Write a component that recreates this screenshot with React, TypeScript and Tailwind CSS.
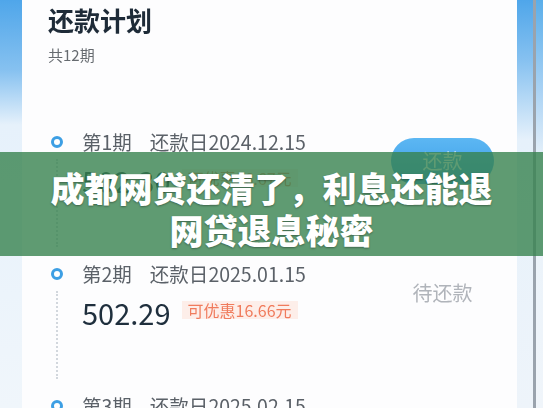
import React from 'react';

type Period = {
  no: number;
  date: string;
  amount: string;
  discount: string;
  due: boolean;
};

const PERIODS: Period[] = [
  { no: 1, date: '2024.12.15', amount: '502.30', discount: '16.67', due: true },
  { no: 2, date: '2025.01.15', amount: '502.29', discount: '16.66', due: false },
  { no: 3, date: '2025.02.15', amount: '502.29', discount: '16.66', due: false },
];

const PeriodRow = ({ p }: { p: Period }) => (
  <div className="flex h-[132px] shrink-0">
    {/* timeline */}
    <div className="w-[18px] flex flex-col items-center pt-[7px]">
      <div className="w-[12px] h-[12px] rounded-full border-[3px] border-[#3d9fe4] bg-white" />
      <div className="mt-[11px] h-[88px] w-0 border-l-2 border-dotted border-[#d2d7dd]" />
    </div>

    <div className="flex-1 ml-[16px]">
      <div className="text-[19.5px] leading-[26px] text-[#5b6168] whitespace-nowrap">
        第{p.no}期<span className="ml-[18px]">还款日{p.date}</span>
      </div>
      <div className="mt-[7px] h-[36px] flex items-center">
        <span className="text-[29px] leading-[36px] text-[#1f2f3d]">{p.amount}</span>
        <span className="ml-[11px] mb-[4px] px-[6px] text-[16px] leading-[18px] bg-[#fdeee9] text-[#f07b5c]">
          可优惠{p.discount}元
        </span>
      </div>
    </div>

    <div className="w-[103px] mr-[23px] pt-[9px]">
      {p.due ? (
        <div className="h-[46px] rounded-full bg-[linear-gradient(to_bottom,#5cb7f3,#3a9be6)] flex items-center justify-center text-white text-[20px]">
          还款
        </div>
      ) : (
        <div className="h-[46px] flex items-center justify-center text-[20px] text-[#b0b4ba]">待还款</div>
      )}
    </div>
  </div>
);

export default function App() {
  return (
    <div className="relative w-[543px] h-[408px] overflow-hidden bg-[#eef4fa] font-['Noto_Sans_CJK_SC','Noto_Sans',sans-serif]">
      {/* App screenshot */}
      <div className="flex h-full blur-[0.4px]">
        <div className="w-[22px] bg-[linear-gradient(to_bottom,#4fa6ea_0px,#86c1f0_70px,#e6f1fb_125px,#f0f6fb_100%)]" />

        <div className="w-[495px] bg-[#fdfdfe] flex flex-col">
          <div className="pl-[26px] pt-[4px]">
            <h1 className="text-[26px] leading-[32px] font-bold text-[#1e2b38]">还款计划</h1>
            <p className="mt-[9px] text-[15px] leading-[20px] text-[#666b70]">共12期</p>
          </div>
          <div className="mt-[27px] h-px bg-[#f1f2f4]" />
          <div className="pl-[26px] pt-[37px] flex flex-col">
            {PERIODS.map((p) => (
              <PeriodRow key={p.no} p={p} />
            ))}
          </div>
        </div>

        <div className="flex-1 flex">
          <div className="w-[16px] bg-[linear-gradient(to_bottom,#4fa6ea_0px,#86c1f0_60px,#e6f1fb_140px,#eef4fa_100%)]" />
          <div className="w-[3px] bg-[#9aa3ad]" />
          <div className="flex-1 bg-[linear-gradient(to_bottom,#5aaeea_0px,#a9d2f4_90px,#e9f2fa_160px,#f0f5fa_100%)]" />
        </div>
      </div>

      {/* Title banner */}
      <div className="absolute left-0 right-0 top-[152px] h-[104px] bg-[rgba(55,130,79,0.8)] pt-[15px] text-center text-white text-[34px] leading-[42px] font-black [text-shadow:0_1px_2px_rgba(0,0,0,0.35)]">
        <div>成都网贷还清了，利息还能退</div>
        <div>网贷退息秘密</div>
      </div>
    </div>
  );
}
